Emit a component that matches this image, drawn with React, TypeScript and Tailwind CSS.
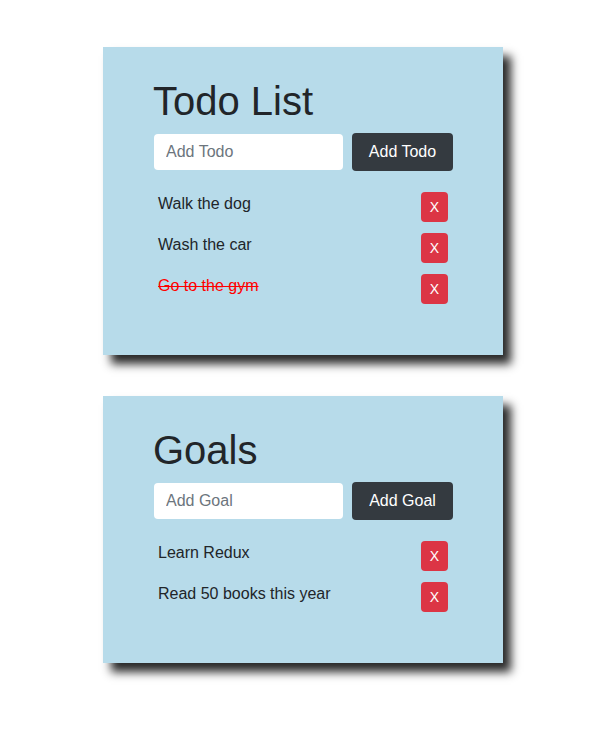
import { useState } from 'react';

type Item = { id: number; text: string; done: boolean };

interface ListCardProps {
  title: string;
  placeholder: string;
  buttonLabel: string;
  initial: Item[];
}

const ListCard = ({ title, placeholder, buttonLabel, initial }: ListCardProps) => {
  const [items, setItems] = useState<Item[]>(initial);
  const [value, setValue] = useState('');

  const addItem = () => {
    if (!value.trim()) return;
    setItems((prev) => [...prev, { id: Date.now(), text: value, done: false }]);
    setValue('');
  };

  const toggle = (id: number) => {
    setItems((prev) => prev.map((i) => (i.id === id ? { ...i, done: !i.done } : i)));
  };

  const remove = (id: number) => {
    setItems((prev) => prev.filter((i) => i.id !== id));
  };

  return (
    <div className="w-[400px] bg-[#b7dbea] px-[50px] pt-[30px] pb-[51px] shadow-[8px_9px_9px_#2a2a2a]">
      <h1 className="text-[40px] leading-[48px] font-normal text-[#212529] mb-[8px]">{title}</h1>

      {/* Input row */}
      <div className="flex items-center gap-[9px] h-[38px]">
        <input
          value={value}
          onChange={(e) => setValue(e.target.value)}
          placeholder={placeholder}
          className="w-[189px] h-[36px] ml-[1px] bg-white rounded-[4px] px-[12px] text-[16px] text-[#495057] placeholder:text-[#6c757d] outline-none"
        />
        <button
          onClick={addItem}
          className="w-[101px] h-[38px] bg-[#343a40] text-white text-[16px] rounded-[4px]"
        >
          {buttonLabel}
        </button>
      </div>

      {/* Items */}
      <ul className="mt-[21px] flex flex-col gap-[11px] px-[5px]">
        {items.map((item) => (
          <li key={item.id} className="flex justify-between items-start h-[30px]">
            <span
              onClick={() => toggle(item.id)}
              className={
                item.done
                  ? 'text-[16px] leading-[24px] text-[#ff0000] line-through cursor-pointer'
                  : 'text-[16px] leading-[24px] text-[#212529] cursor-pointer'
              }
            >
              {item.text}
            </span>
            <button
              onClick={() => remove(item.id)}
              className="w-[27px] h-[30px] bg-[#dc3545] text-white text-[14px] rounded-[4px] flex items-center justify-center"
            >
              X
            </button>
          </li>
        ))}
      </ul>
    </div>
  );
};

export default function App() {
  return (
    <div className="min-h-screen bg-white pt-[47px] pb-[60px] font-['Liberation_Sans',Arial,sans-serif]">
      <div className="flex flex-col gap-[41px] ml-[103px]">
        <ListCard
          title="Todo List"
          placeholder="Add Todo"
          buttonLabel="Add Todo"
          initial={[
            { id: 1, text: 'Walk the dog', done: false },
            { id: 2, text: 'Wash the car', done: false },
            { id: 3, text: 'Go to the gym', done: true },
          ]}
        />
        <ListCard
          title="Goals"
          placeholder="Add Goal"
          buttonLabel="Add Goal"
          initial={[
            { id: 1, text: 'Learn Redux', done: false },
            { id: 2, text: 'Read 50 books this year', done: false },
          ]}
        />
      </div>
    </div>
  );
}
